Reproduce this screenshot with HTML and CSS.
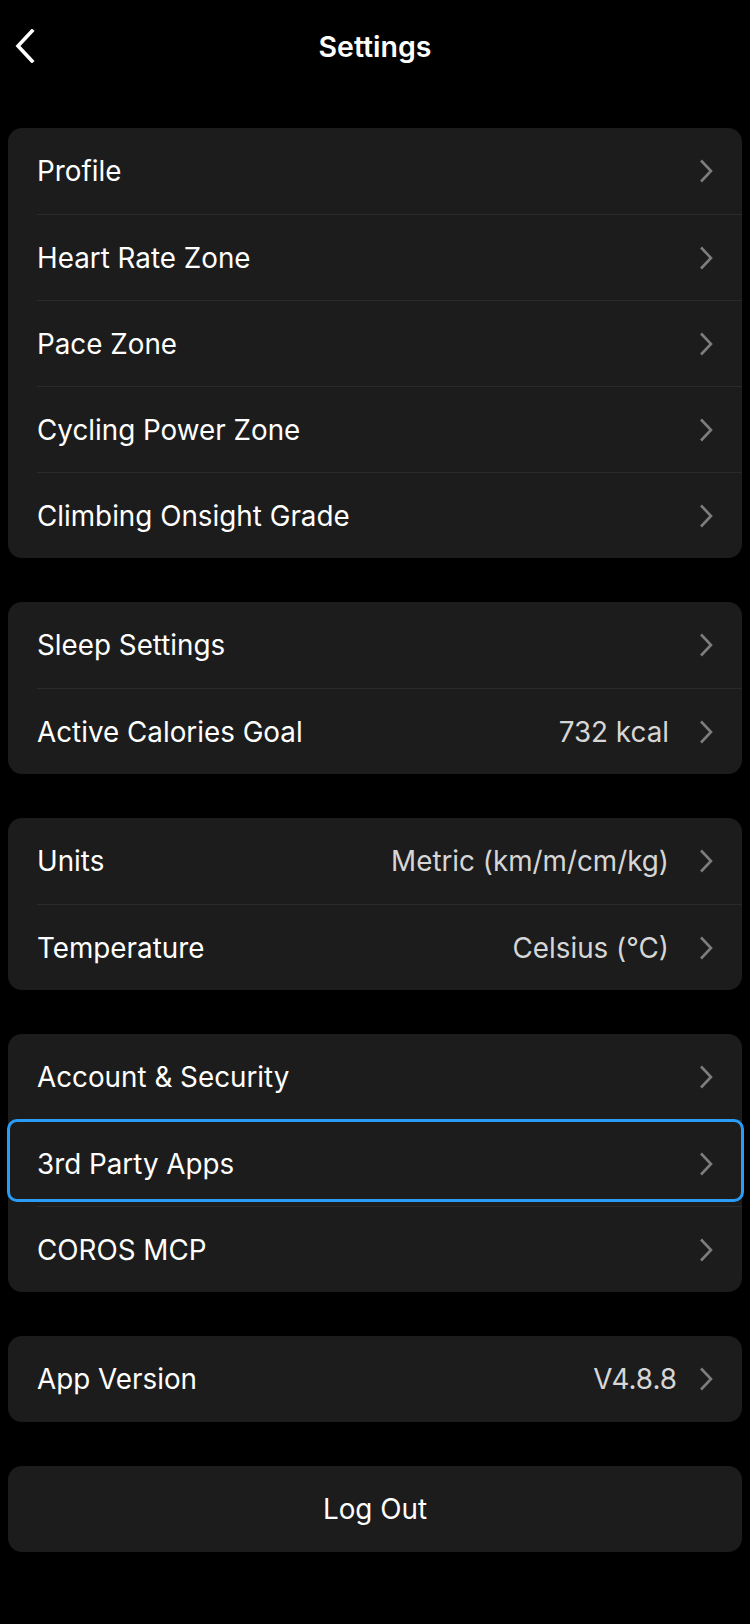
FILE: index.html
```html
<!DOCTYPE html>
<html lang="en">
<head>
<meta charset="utf-8">
<title>Settings</title>
<link rel="stylesheet" href="styles.css">
</head>
<body>
<div class="screen">
  <header class="nav">
    <div class="nav-left">
      <svg class="back" width="20" height="34" viewBox="0 0 20 34" aria-hidden="true"><path d="M17 2 L3 17 L17 32" fill="none" stroke="#fff" stroke-width="3.6" stroke-linecap="square" stroke-linejoin="miter"/></svg>
    </div>
    <h1 class="title">Settings</h1>
    <div class="nav-right"></div>
  </header>

  <main class="list">
    <section class="card">
      <div class="row"><div class="row-inner"><span class="label">Profile</span><span class="chev"><svg width="14" height="24" viewBox="0 0 14 24"><path d="M2 1.5 L12 12 L2 22.5" fill="none" stroke="#7d7d7d" stroke-width="2.6"/></svg></span></div></div>
      <div class="row"><div class="row-inner sep"><span class="label">Heart Rate Zone</span><span class="chev"><svg width="14" height="24" viewBox="0 0 14 24"><path d="M2 1.5 L12 12 L2 22.5" fill="none" stroke="#7d7d7d" stroke-width="2.6"/></svg></span></div></div>
      <div class="row"><div class="row-inner sep"><span class="label">Pace Zone</span><span class="chev"><svg width="14" height="24" viewBox="0 0 14 24"><path d="M2 1.5 L12 12 L2 22.5" fill="none" stroke="#7d7d7d" stroke-width="2.6"/></svg></span></div></div>
      <div class="row"><div class="row-inner sep"><span class="label">Cycling Power Zone</span><span class="chev"><svg width="14" height="24" viewBox="0 0 14 24"><path d="M2 1.5 L12 12 L2 22.5" fill="none" stroke="#7d7d7d" stroke-width="2.6"/></svg></span></div></div>
      <div class="row"><div class="row-inner sep"><span class="label">Climbing Onsight Grade</span><span class="chev"><svg width="14" height="24" viewBox="0 0 14 24"><path d="M2 1.5 L12 12 L2 22.5" fill="none" stroke="#7d7d7d" stroke-width="2.6"/></svg></span></div></div>
    </section>

    <section class="card">
      <div class="row"><div class="row-inner"><span class="label">Sleep Settings</span><span class="chev"><svg width="14" height="24" viewBox="0 0 14 24"><path d="M2 1.5 L12 12 L2 22.5" fill="none" stroke="#7d7d7d" stroke-width="2.6"/></svg></span></div></div>
      <div class="row"><div class="row-inner sep"><span class="label">Active Calories Goal</span><span class="value">732 kcal</span><span class="chev"><svg width="14" height="24" viewBox="0 0 14 24"><path d="M2 1.5 L12 12 L2 22.5" fill="none" stroke="#7d7d7d" stroke-width="2.6"/></svg></span></div></div>
    </section>

    <section class="card">
      <div class="row"><div class="row-inner"><span class="label">Units</span><span class="value">Metric (km/m/cm/kg)</span><span class="chev"><svg width="14" height="24" viewBox="0 0 14 24"><path d="M2 1.5 L12 12 L2 22.5" fill="none" stroke="#7d7d7d" stroke-width="2.6"/></svg></span></div></div>
      <div class="row"><div class="row-inner sep"><span class="label">Temperature</span><span class="value">Celsius (°C)</span><span class="chev"><svg width="14" height="24" viewBox="0 0 14 24"><path d="M2 1.5 L12 12 L2 22.5" fill="none" stroke="#7d7d7d" stroke-width="2.6"/></svg></span></div></div>
    </section>

    <section class="card">
      <div class="row"><div class="row-inner"><span class="label">Account &amp; Security</span><span class="chev"><svg width="14" height="24" viewBox="0 0 14 24"><path d="M2 1.5 L12 12 L2 22.5" fill="none" stroke="#7d7d7d" stroke-width="2.6"/></svg></span></div></div>
      <div class="row row-focused"><div class="row-inner sep"><span class="label">3rd Party Apps</span><span class="chev"><svg width="14" height="24" viewBox="0 0 14 24"><path d="M2 1.5 L12 12 L2 22.5" fill="none" stroke="#7d7d7d" stroke-width="2.6"/></svg></span></div></div>
      <div class="row"><div class="row-inner sep"><span class="label">COROS MCP</span><span class="chev"><svg width="14" height="24" viewBox="0 0 14 24"><path d="M2 1.5 L12 12 L2 22.5" fill="none" stroke="#7d7d7d" stroke-width="2.6"/></svg></span></div></div>
    </section>

    <section class="card">
      <div class="row"><div class="row-inner"><span class="label">App Version</span><span class="value value-tight">V4.8.8</span><span class="chev"><svg width="14" height="24" viewBox="0 0 14 24"><path d="M2 1.5 L12 12 L2 22.5" fill="none" stroke="#7d7d7d" stroke-width="2.6"/></svg></span></div></div>
    </section>

    <section class="card">
      <button class="logout" type="button">Log Out</button>
    </section>
  </main>
</div>
</body>
</html>
```

FILE: styles.css
```css
* { box-sizing: border-box; }

html, body {
  margin: 0;
  padding: 0;
  background: #000;
}

body {
  font-family: "Inter", "Noto Sans", "Liberation Sans", sans-serif;
  color: #fff;
  -webkit-font-smoothing: antialiased;
}

.screen {
  width: 750px;
  min-height: 1624px;
  background: #000;
}

.nav {
  height: 92px;
  display: grid;
  grid-template-columns: 1fr auto 1fr;
  align-items: center;
}

.nav-left {
  display: flex;
  align-items: center;
  padding-left: 15px;
}

.back { display: block; }

.title {
  margin: 0;
  font-size: 28.5px;
  font-weight: 600;
  color: #fff;
}

.list {
  padding: 36px 8px 0;
  display: flex;
  flex-direction: column;
  gap: 44px;
}

.card {
  background: #1c1c1c;
  border-radius: 14px;
  display: flex;
  flex-direction: column;
}

.row {
  position: relative;
  height: 86px;
  display: flex;
}

.row-inner {
  flex: 1;
  margin-left: 29px;
  padding-right: 29px;
  display: flex;
  align-items: center;
}

.row-inner.sep {
  border-top: 1px solid #2b2b2b;
}

.label {
  flex: 1;
  font-size: 27.8px;
  font-weight: 400;
  color: #fff;
}

.value {
  font-size: 27.8px;
  color: #d6d6d6;
  margin-right: 30px;
}

.value-tight { margin-right: 22px; }

.chev {
  display: flex;
  width: 14px;
  height: 24px;
}

.row-focused::after {
  content: "";
  position: absolute;
  top: -1px;
  bottom: 4px;
  left: -1px;
  right: -2px;
  border: 3px solid #2a9cf5;
  border-radius: 10px;
  pointer-events: none;
}

.logout {
  height: 86px;
  width: 100%;
  background: transparent;
  border: 0;
  color: #fff;
  font-family: inherit;
  font-size: 27.8px;
  font-weight: 400;
  padding: 0;
}
```
